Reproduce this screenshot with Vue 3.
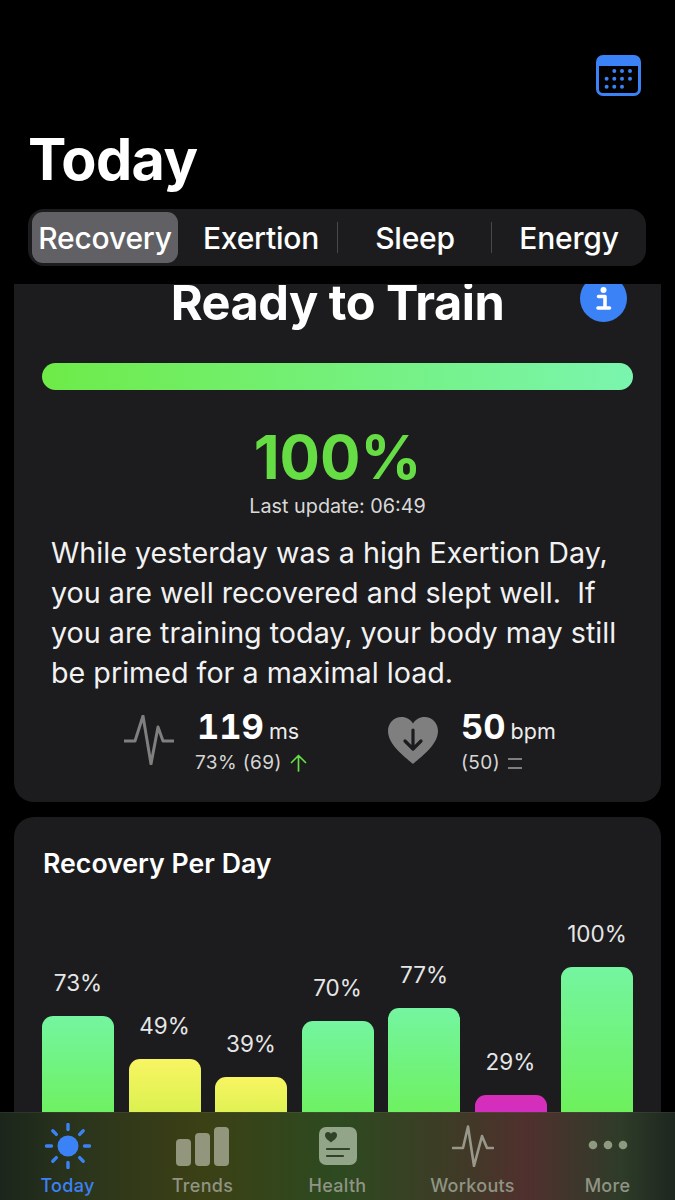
<script setup>
const segments = ['Recovery', 'Exertion', 'Sleep', 'Energy']
const bars = [
  { label: '73%', h: 131, kind: 'green' },
  { label: '49%', h: 88, kind: 'yellow' },
  { label: '39%', h: 70, kind: 'yellow' },
  { label: '70%', h: 126, kind: 'green' },
  { label: '77%', h: 139, kind: 'green' },
  { label: '29%', h: 52, kind: 'pink' },
  { label: '100%', h: 180, kind: 'green' }
]
const calDots = [
  [18.3, 16], [26, 16], [34, 16],
  [10.6, 23.7], [18.3, 23.7], [26, 23.7], [34, 23.7],
  [10.6, 31.7], [18.3, 31.7], [26, 31.7]
]
const rays = [0, 45, 90, 135, 180, 225, 270, 315]
</script>

<template>
  <div class="page">
    <header class="head">
      <div class="cal-row">
        <svg class="cal" width="45" height="41" viewBox="0 0 45 41">
          <rect x="0" y="0" width="45" height="41" rx="7" fill="#3b82f6" />
          <path d="M3 11h39v23a4 4 0 0 1-4 4H7a4 4 0 0 1-4-4z" fill="#000" />
          <circle v-for="(d, i) in calDots" :key="i" :cx="d[0]" :cy="d[1]" r="2" fill="#3b82f6" />
        </svg>
      </div>
      <h1 class="title">Today</h1>
      <div class="seg">
        <div v-for="(s, i) in segments" :key="s" class="seg-item" :class="{ active: i === 0, rule: i === 1 || i === 2 }">{{ s }}</div>
      </div>
    </header>

    <main class="scroller">
      <section class="card top">
        <div class="ready-row">
          <h2 class="ready">Ready to Train</h2>
          <span class="info">
            <svg width="47" height="47" viewBox="0 0 47 47">
              <circle cx="23.5" cy="23.5" r="23.5" fill="#3b82f6" />
              <circle cx="23.5" cy="15" r="3" fill="#fff" />
              <path d="M18.5 21.5h6.5v11M18 33h11.5" fill="none" stroke="#fff" stroke-width="3.6" stroke-linecap="round" stroke-linejoin="round" />
            </svg>
          </span>
        </div>
        <div class="meter"></div>
        <div class="pct">100%</div>
        <div class="update">Last update: 06:49</div>
        <p class="copy">While yesterday was a high Exertion Day, you are well recovered and slept well.&nbsp; If you are training today, your body may still be primed for a maximal load.</p>
        <div class="stats">
          <div class="stat hrv">
            <svg width="50" height="50" viewBox="0 0 50 50">
              <path d="M0 26h11l8-25 8 48 7-37 5 14h11" fill="none" stroke="#7f7f7f" stroke-width="3" stroke-linejoin="round" stroke-linecap="round" />
            </svg>
            <div class="stat-text">
              <div class="big-line"><b>119</b><span>ms</span></div>
              <div class="sub-line">73% (69)
                <svg class="up" width="17" height="18" viewBox="0 0 17 18">
                  <path d="M8.500 17V1.500M1.500 8.500l7-7 7 7" fill="none" stroke="#66dd44" stroke-width="1.700" stroke-linecap="round" stroke-linejoin="round" />
                </svg>
              </div>
            </div>
          </div>
          <div class="stat hr">
            <svg width="50" height="47" viewBox="0 0 50 47">
              <path d="M25 47C20 42 0 29 0 14 0 6 6 0 13.500 0 18.500 0 22.500 2.500 25 6.500 27.500 2.500 31.500 0 36.500 0 44 0 50 6 50 14 50 29 30 42 25 47z" fill="#7f7f7f" />
              <path d="M25 13v18M17 24l8 8 8-8" fill="none" stroke="#1c1c1e" stroke-width="3.2" stroke-linecap="round" stroke-linejoin="round" />
            </svg>
            <div class="stat-text">
              <div class="big-line"><b>50</b><span>bpm</span></div>
              <div class="sub-line">(50) <span class="eq"></span></div>
            </div>
          </div>
        </div>
      </section>

      <section class="card chart">
        <h3 class="chart-title">Recovery Per Day</h3>
        <div class="bars">
          <div v-for="(b, i) in bars" :key="i" class="bar-col">
            <span class="bar-label">{{ b.label }}</span>
            <div class="bar" :class="b.kind" :style="{ height: b.h + 'px' }"></div>
          </div>
        </div>
      </section>
    </main>

    <nav class="tabs">
      <div class="tab active">
        <div class="slot">
          <svg width="46" height="46" viewBox="0 0 46 46">
            <circle cx="23" cy="23" r="10.500" fill="#3b82f6" />
            <line v-for="r in rays" :key="r" x1="23" y1="1.500" x2="23" y2="6.500" stroke="#3b82f6" stroke-width="3.400" stroke-linecap="round" :transform="`rotate(${r} 23 23)`" />
          </svg>
        </div>
        <span>Today</span>
      </div>
      <div class="tab">
        <div class="slot">
          <svg width="54" height="39" viewBox="0 0 54 39">
            <rect x="0" y="12" width="15" height="27" rx="4" fill="#92967d" />
            <rect x="19" y="6" width="15" height="33" rx="4" fill="#92967d" />
            <rect x="38" y="0" width="15" height="39" rx="4" fill="#92967d" />
          </svg>
        </div>
        <span>Trends</span>
      </div>
      <div class="tab">
        <div class="slot">
          <svg width="38" height="38" viewBox="0 0 38 38">
            <rect width="38" height="38" rx="7" fill="#93a588" />
            <path d="M12 15.500c-2-2-6-3.500-6-7.500 0-2 1.500-3 3-3 1.200 0 2.400.7 3 1.900.6-1.200 1.800-1.900 3-1.900 1.500 0 3 1 3 3 0 4-4 5.500-6 7.500z" fill="#2e4327" />
            <path d="M8 22h22M8 29h16" stroke="#2e4327" stroke-width="2.200" stroke-linecap="round" />
          </svg>
        </div>
        <span>Health</span>
      </div>
      <div class="tab">
        <div class="slot">
          <svg width="42" height="42" viewBox="0 0 42 42">
            <path d="M1 23h10l5-21.500 6 39.500 8-30 5 12h6" fill="none" stroke="#98988a" stroke-width="2.600" stroke-linecap="round" stroke-linejoin="round" />
          </svg>
        </div>
        <span>Workouts</span>
      </div>
      <div class="tab">
        <div class="slot">
          <svg width="40" height="12" viewBox="0 0 40 12">
            <circle cx="5" cy="5" r="4.300" fill="#8e9a80" />
            <circle cx="20" cy="5" r="4.300" fill="#8e9a80" />
            <circle cx="35" cy="5" r="4.300" fill="#8e9a80" />
          </svg>
        </div>
        <span>More</span>
      </div>
    </nav>
  </div>
</template>

<style>
html, body { margin: 0; background: #000; }
</style>

<style scoped>
.page {
  position: relative;
  width: 675px;
  height: 1200px;
  overflow: hidden;
  background: #000;
  color: #fff;
  font-family: Inter, "Liberation Sans", sans-serif;
  display: flex;
  flex-direction: column;
}
.head { padding: 55px 29px 0 28px; height: 284px; box-sizing: border-box; flex: none; }
.cal-row { display: flex; justify-content: flex-end; padding-right: 5px; }
.cal { display: block; }
.title {
  margin: 28px 0 0;
  font-size: 57.500px;
  line-height: 70px;
  font-weight: 700;
  letter-spacing: -0.6px;
}
.seg {
  margin-top: 15px;
  height: 57px;
  background: #1c1c1e;
  border-radius: 16px;
  display: grid;
  grid-template-columns: 152px 154px 154px 154px;
  padding: 3px 0 3px 4px;
  box-sizing: border-box;
}
.seg-item {
  position: relative;
  display: flex;
  align-items: center;
  justify-content: center;
  font-size: 30px;
  font-weight: 500;
  letter-spacing: -0.2px;
  border-radius: 11px;
}
.seg-item.active { background: #616165; margin-right: 6px; }
.seg-item.rule::after {
  content: "";
  position: absolute;
  right: 0;
  top: 10px;
  bottom: 10px;
  width: 1px;
  background: #48484a;
}
.scroller { flex: 1; overflow: hidden; padding: 0 14px; min-height: 0; }
.card { background: #1c1c1e; border-radius: 20px; }
.top { margin-top: -33px; padding: 0 28px; height: 551px; box-sizing: border-box; }
.ready-row { position: relative; height: 87px; display: flex; align-items: flex-end; justify-content: center; }
.ready { margin: 0 0 16px; font-size: 48.700px; line-height: 38px; font-weight: 700; letter-spacing: -0.5px; }
.info { position: absolute; right: 6px; top: 24px; display: block; height: 47px; }
.info svg { display: block; }
.meter {
  margin: 25px 0 0;
  height: 27px;
  border-radius: 14px;
  background: linear-gradient(90deg, #6eeb48, #7af5ae);
}
.pct {
  margin-top: 32px;
  text-align: center;
  font-size: 60px;
  line-height: 70px;
  font-weight: 700;
  color: #66dd44;
}
.update { text-align: center; font-size: 19.800px; line-height: 24px; color: #d9d9d9; margin-top: 2px; }
.copy {
  margin: 15px -18px 0 9px;
  font-size: 28.700px;
  line-height: 40px;
  color: #f2f2f2;
}
.stats { display: flex; margin-top: 13px; padding-left: 82px; }
.stat { display: flex; align-items: center; }
.stat.hrv { width: 264px; flex: none; }
.stat-text { margin-left: 23px; }
.hrv .stat-text { margin-left: 21px; }
.big-line { display: flex; align-items: baseline; gap: 5px; line-height: 42px; }
.big-line b { font-size: 34.500px; font-weight: 700; font-variant-numeric: tabular-nums; }
.big-line span { font-size: 21.500px; color: #ededed; }
.hrv .big-line { padding-left: 2px; }
.sub-line { font-size: 19px; line-height: 22px; color: #d6d6d6; letter-spacing: 0.4px; display: flex; align-items: center; gap: 8px; }
.up { display: block; }
.eq { display: block; width: 14px; height: 7px; border-top: 2px solid #7f7f7f; border-bottom: 2px solid #7f7f7f; }
.chart { margin-top: 15px; height: 420px; padding: 30px 28px 0 28px; box-sizing: border-box; }
.chart-title { margin: 0 0 0 1px; font-size: 26.700px; line-height: 32px; font-weight: 600; }
.bars { display: flex; justify-content: space-between; align-items: flex-end; height: 268px; }
.bar-col { width: 72px; display: flex; flex-direction: column; align-items: center; }
.bar-label { font-size: 22.500px; line-height: 28px; color: #e6e6e6; margin-bottom: 19px; white-space: nowrap; }
.bar { width: 72px; border-radius: 11px 11px 0 0; }
.bar.green { background: linear-gradient(180deg, #74f5a0, #6cef4c); }
.bar.yellow { background: linear-gradient(180deg, #f8f562, #c8ee44); }
.bar.pink { background: linear-gradient(180deg, #d62eb8, #cf2ed0); }
.tabs {
  position: absolute;
  left: 0;
  right: 0;
  bottom: 0;
  height: 88px;
  display: grid;
  grid-template-columns: repeat(5, 1fr);
  background: linear-gradient(90deg, #1b251b 0%, #2b351c 12%, #3c4015 30%, #2d4a20 50%, #3f3a26 68%, #50302e 78%, #2e3c28 92%, #1e2620 100%);
  border-top: 1px solid rgba(255, 255, 255, 0.06);
  box-sizing: border-box;
}
.tab { display: flex; flex-direction: column; align-items: center; color: #8f9484; padding-top: 10px; }
.slot { height: 46px; display: flex; align-items: center; justify-content: center; }
.slot svg { display: block; }
.tab span { font-size: 18px; line-height: 24px; font-weight: 500; letter-spacing: 0.3px; margin-top: 5px; }
.tab.active { color: #3b82f6; }
</style>
